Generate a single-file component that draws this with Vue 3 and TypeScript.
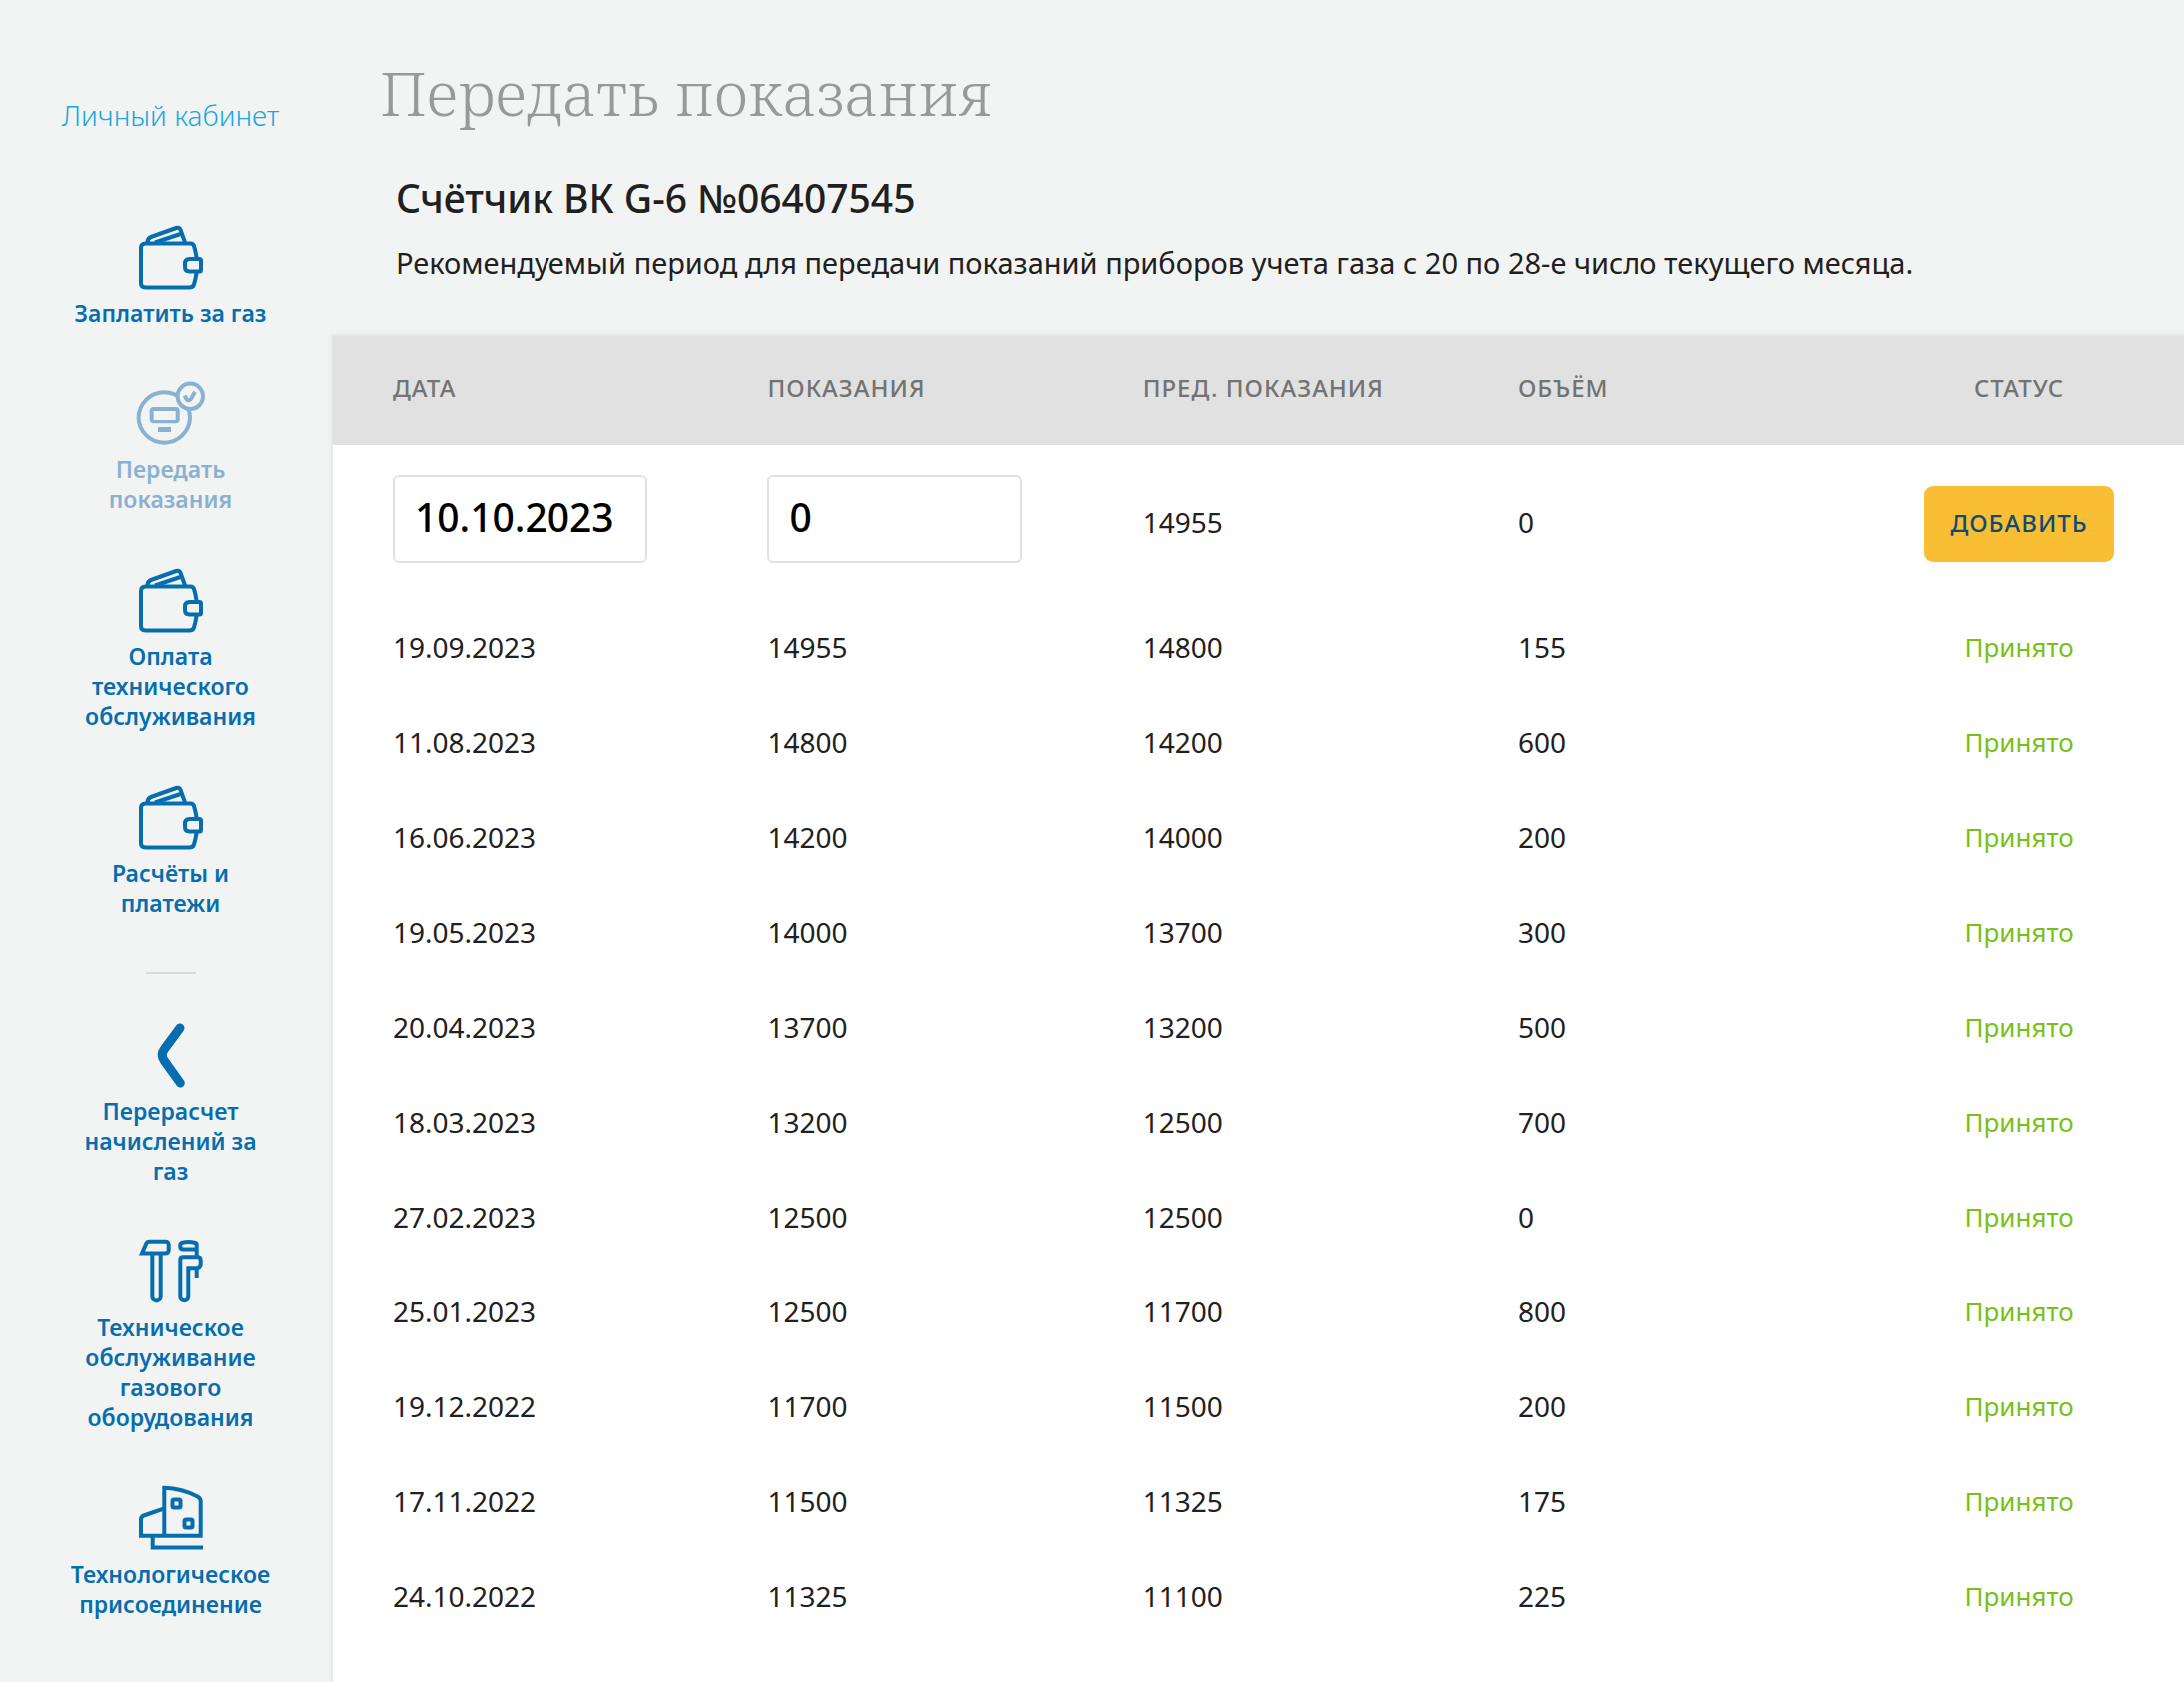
<script setup lang="ts">
import { ref } from 'vue'

type IconName = 'wallet' | 'meter' | 'chevron' | 'tools' | 'building'

interface NavItem {
  label: string
  icon: IconName
  active?: boolean
}

interface Reading {
  date: string
  value: number
  previous: number
  volume: number
}

const paymentItems: NavItem[] = [
  { label: 'Заплатить за газ', icon: 'wallet' },
  { label: 'Передать показания', icon: 'meter', active: true },
  { label: 'Оплата технического обслуживания', icon: 'wallet' },
  { label: 'Расчёты и платежи', icon: 'wallet' },
]

const serviceItems: NavItem[] = [
  { label: 'Перерасчет начислений за газ', icon: 'chevron' },
  { label: 'Техническое обслуживание газового оборудования', icon: 'tools' },
  { label: 'Технологическое присоединение', icon: 'building' },
]

const groups = [paymentItems, serviceItems]

const readings: Reading[] = [
  { date: '19.09.2023', value: 14955, previous: 14800, volume: 155 },
  { date: '11.08.2023', value: 14800, previous: 14200, volume: 600 },
  { date: '16.06.2023', value: 14200, previous: 14000, volume: 200 },
  { date: '19.05.2023', value: 14000, previous: 13700, volume: 300 },
  { date: '20.04.2023', value: 13700, previous: 13200, volume: 500 },
  { date: '18.03.2023', value: 13200, previous: 12500, volume: 700 },
  { date: '27.02.2023', value: 12500, previous: 12500, volume: 0 },
  { date: '25.01.2023', value: 12500, previous: 11700, volume: 800 },
  { date: '19.12.2022', value: 11700, previous: 11500, volume: 200 },
  { date: '17.11.2022', value: 11500, previous: 11325, volume: 175 },
  { date: '24.10.2022', value: 11325, previous: 11100, volume: 225 },
]

const newDate = ref('10.10.2023')
const newValue = ref('0')
</script>

<template>
  <div class="layout">
    <aside class="sidebar">
      <a class="account" href="#">Личный кабинет</a>
      <nav class="nav">
        <ul v-for="(group, index) in groups" :key="index" class="group">
          <li v-for="item in group" :key="item.label">
            <a href="#" class="item" :class="{ active: item.active }">
              <svg class="icon" viewBox="0 0 64 64" aria-hidden="true">
                <template v-if="item.icon === 'wallet'">
                  <path d="M57.6 33C57 28.500 56 24 55 21Q54.200 18.500 51.500 18.500H6.500Q2 18.500 2 23V58Q2 62.500 6.500 62.500H50.500Q54 62.500 55 59.500C56 56 57 52 57.600 47.500" />
                  <path d="M62 35.500Q62 34 60.500 34H50.500Q46 34 46 38.500V42Q46 46.500 50.500 46.500H60.500Q62 46.500 62 45Z" />
                  <path d="M8.500 18Q8.300 13.300 12 12L37.200 3Q40.500 2 41.600 5L46.200 18M16 17.500L43 8.500" />
                </template>
                <template v-else-if="item.icon === 'meter'">
                  <circle cx="25.300" cy="36" r="25.700" />
                  <circle class="knockout" cx="51.300" cy="14.300" r="12.700" />
                  <rect x="12.700" y="27" width="26" height="13.300" rx="2" />
                  <path stroke-width="5" d="M19 48.500H32" />
                  <path d="M45.800 13.500Q47.300 18 49.200 18.300Q51.300 18.600 52.800 15.500L56 9.700" />
                </template>
                <path v-else-if="item.icon === 'chevron'" stroke-width="9" stroke-linecap="round" d="M41 5L25.500 26Q21 32 25.500 38L41.300 60" />
                <template v-else-if="item.icon === 'tools'">
                  <path d="M3 13.500H26Q29.700 13.500 29.700 10V5Q29.700 1.700 26.500 1.700H10Q8.200 1.700 7.500 3.300Z" />
                  <path d="M13.300 14V57.200A4.200 4.200 0 0 0 21.700 57.200V14" />
                  <path d="M57.700 17V4.500Q57.700 3.300 55.500 2.700Q49.500 1.300 43.500 2.700Q41.300 3.300 41.300 5V6.500Q41.300 9.500 44.300 9.500H57.700" />
                  <path d="M49.300 57.200V29.300H58.500Q61.700 27.800 61.700 25.500V20.500Q61.700 17.300 58.500 17.300H44Q41.300 17.300 41.300 20V57.200A4 4 0 0 0 49.300 57.200M57.700 29V39" />
                </template>
                <template v-else>
                  <path d="M25.300 49.700V1.800C38 2.300 49 5.500 58.500 10.500Q61.700 12.200 61.700 15V49.700H2V33.500Q2 30.500 4.800 29.500L25.300 22.300" />
                  <rect x="33.500" y="13.500" width="8" height="8" rx="1.500" />
                  <rect x="45.500" y="33.500" width="8" height="8" rx="1.500" />
                  <path d="M13.700 49.700V61.500H64" />
                </template>
              </svg>
              <span class="label">{{ item.label }}</span>
            </a>
          </li>
        </ul>
      </nav>
    </aside>

    <main class="main">
      <header class="intro">
        <h1>Передать показания</h1>
        <h2>Счётчик ВК G-6 №06407545</h2>
        <p>Рекомендуемый период для передачи показаний приборов учета газа с 20 по 28-е число текущего месяца.</p>
      </header>

      <form class="panel" @submit.prevent>
        <table>
          <colgroup>
            <col class="col-first" />
            <col class="col" />
            <col class="col" />
            <col class="col" />
            <col />
          </colgroup>
          <thead>
            <tr>
              <th scope="col">Дата</th>
              <th scope="col">Показания</th>
              <th scope="col">Пред. показания</th>
              <th scope="col">Объём</th>
              <th scope="col">Статус</th>
            </tr>
          </thead>
          <tbody>
            <tr class="entry">
              <td><input v-model="newDate" type="text" aria-label="Дата" /></td>
              <td><input v-model="newValue" type="text" inputmode="numeric" aria-label="Показания" /></td>
              <td>14955</td>
              <td>0</td>
              <td><button type="submit">Добавить</button></td>
            </tr>
            <tr v-for="row in readings" :key="row.date">
              <td>{{ row.date }}</td>
              <td>{{ row.value }}</td>
              <td>{{ row.previous }}</td>
              <td>{{ row.volume }}</td>
              <td class="accepted">Принято</td>
            </tr>
          </tbody>
        </table>
      </form>
    </main>
  </div>
</template>

<style>
body {
  margin: 0;
  background: #f2f4f3;
}
</style>

<style scoped>
.layout {
  display: flex;
  min-height: 100vh;
  background: #f2f4f3;
  color: #1f2020;
  font-family: "Noto Sans", "Open Sans", sans-serif;
}

.sidebar {
  flex: none;
  box-sizing: border-box;
  width: 333px;
  padding: 95px 0 0 8px;
  display: flex;
  flex-direction: column;
  align-items: center;
}

.account {
  color: #1aa7df;
  font-size: 28px;
  font-weight: 300;
  line-height: 40px;
  text-decoration: none;
}

.nav {
  margin-top: 90px;
}

.group {
  margin: 0;
  padding: 0;
  list-style: none;
}

.group + .group::before {
  content: "";
  display: block;
  width: 50px;
  height: 2px;
  margin: 0 auto 49px;
  background: #d9dbda;
}

.item {
  display: flex;
  flex-direction: column;
  align-items: center;
  gap: 9px;
  padding-bottom: 54px;
  color: #066eae;
  text-decoration: none;
}

.item.active {
  color: #8ab1d1;
}

.icon {
  display: block;
  width: 64px;
  height: 64px;
  overflow: visible;
  fill: none;
  stroke: currentColor;
  stroke-width: 4;
}

.knockout {
  fill: #f2f4f3;
}

.label {
  width: 204px;
  font-size: 23px;
  font-weight: 570;
  line-height: 30px;
  text-align: center;
}

.main {
  flex: 1;
  min-width: 0;
  display: flex;
  flex-direction: column;
}

.intro {
  padding: 53px 40px 53px 63px;
}

h1 {
  margin: 0 0 40px -16px;
  color: #989998;
  font-family: "Noto Serif", "Liberation Serif", serif;
  font-size: 61px;
  font-weight: 300;
  line-height: 80px;
}

h2 {
  margin: 0 0 20px;
  font-size: 39px;
  font-weight: 500;
  line-height: 50px;
}

p {
  margin: 0;
  font-size: 29px;
  line-height: 40px;
}

.panel {
  flex: 1;
  background: #fff;
  box-shadow: 0 0 0 2px rgba(0, 0, 0, 0.03), 0 0 8px rgba(0, 0, 0, 0.04);
}

table {
  width: 100%;
  border-collapse: collapse;
  table-layout: fixed;
}

.col-first {
  width: 23.5%;
}

.col {
  width: 20.25%;
}

th,
td {
  padding: 0;
  font-size: 28px;
  text-align: left;
}

th:first-child,
td:first-child {
  padding-left: 60px;
}

th:last-child,
td:last-child {
  padding-right: 38px;
  text-align: center;
}

th {
  height: 102px;
  padding-bottom: 8px;
  background: #e1e1e1;
  color: #737373;
  font-size: 24px;
  font-weight: 500;
  letter-spacing: 1px;
  text-transform: uppercase;
}

td {
  height: 95px;
}

.entry td {
  height: 154px;
}

input {
  display: block;
  box-sizing: border-box;
  width: 255px;
  height: 88px;
  padding: 0 20px 6px;
  border: 2px solid #e1e1e1;
  border-radius: 6px;
  background: #fff;
  color: #000;
  font: 500 39px "Noto Sans", sans-serif;
}

.entry td:nth-child(-n + 2) {
  box-sizing: border-box;
  padding-bottom: 6px;
}

button {
  display: block;
  height: 76px;
  margin: 4px auto 0;
  padding: 0 26px 4px;
  border: 0;
  border-radius: 9px;
  background: #f9be34;
  color: #0f4c75;
  font: 500 24px "Noto Sans", sans-serif;
  letter-spacing: 1px;
  text-transform: uppercase;
}

td.accepted {
  color: #7abf18;
  font-size: 26px;
}
</style>
